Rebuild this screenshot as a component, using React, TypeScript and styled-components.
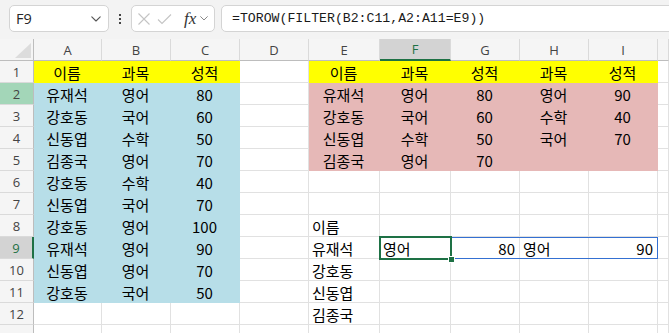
import React from 'react';
import styled, { createGlobalStyle, css } from 'styled-components';

const GlobalStyle = createGlobalStyle`
    html, body {
        margin: 0;
        padding: 0;
        background: #ffffff;
    }
    body {
        font-family: "Noto Sans", "Noto Sans CJK KR", sans-serif;
    }
`;

type Fill = 'yellow' | 'blue' | 'pink';
type Align = 'left' | 'center' | 'right';

const fillColors: Record<Fill, string> = {
    yellow: '#ffff00',
    blue: '#b7dee8',
    pink: '#e6b8b7',
};

const COLS = ['A', 'B', 'C', 'D', 'E', 'F', 'G', 'H', 'I'];
const COL_WIDTHS = [68, 69, 69, 69, 71, 71, 69, 69, 69];
const ROW_COUNT = 13;
const LAST_LABELLED_ROW = 12;

const Page = styled.div`
    width: 669px;
    height: 333px;
    overflow: hidden;
    background: #ffffff;
`;

const TopBar = styled.div`
    display: flex;
    align-items: flex-start;
    height: 39px;
    box-sizing: border-box;
    padding: 5px 0 0 9px;
    background: #f3f3f3;
`;

const Box = styled.div`
    box-sizing: border-box;
    height: 27px;
    background: #ffffff;
    border: 1px solid #d4d4d4;
    border-radius: 5px;
    display: flex;
    align-items: center;
`;

const NameBox = styled(Box)`
    width: 100px;
    padding: 0 7px 0 6px;
    justify-content: space-between;
    font-family: "Open Sans", "Noto Sans", sans-serif;
    font-size: 14.5px;
    color: #262626;
`;

const Kebab = styled.div`
    width: 22px;
    height: 27px;
    display: flex;
    flex-direction: column;
    align-items: center;
    justify-content: center;
    gap: 2px;
`;

const Dot = styled.span`
    width: 2px;
    height: 2px;
    background: #444;
`;

const FxBox = styled(Box)`
    width: 84px;
    padding-left: 5px;
    gap: 6px;
`;

const FxText = styled.span`
    font-family: "Liberation Serif", serif;
    font-style: italic;
    font-size: 17px;
    color: #333;
    margin-left: 6px;
    margin-right: -2px;
    line-height: 1;
`;

const FormulaInput = styled(Box)`
    flex: 1;
    margin-left: 6px;
    margin-right: -12px;
    padding-left: 10px;
    font-family: "Liberation Mono", monospace;
    font-size: 13.2px;
    color: #1a1a1a;
    white-space: nowrap;
`;

const Sheet = styled.div`
    display: grid;
    grid-template-columns: 34px ${COL_WIDTHS.map(w => `${w}px`).join(' ')} 1fr;
    grid-auto-rows: 22px;
`;

const headBase = css`
    box-sizing: border-box;
    display: flex;
    align-items: center;
    justify-content: center;
    font-family: "Open Sans", "Noto Sans", sans-serif;
    font-size: 13px;
    color: #444;
    background: #f5f5f5;
`;

const Corner = styled.div`
    ${headBase};
    position: relative;
    border-right: 1px solid #bdbdbd;
    border-bottom: 1px solid #bdbdbd;
`;

const CornerTriangle = styled.svg`
    position: absolute;
    right: 2px;
    bottom: 2px;
`;

const ColHead = styled.div<{ $active?: boolean }>`
    ${headBase};
    border-right: 1px solid #dadada;
    border-bottom: 1px solid #bdbdbd;
    ${p =>
        p.$active &&
        css`
            background: #d3d3d3;
            color: #1e7145;
            border-bottom: 2px solid #1e7145;
        `}
`;

const RowHead = styled.div<{ $active?: boolean; $hover?: boolean }>`
    ${headBase};
    border-right: 1px solid #bdbdbd;
    border-bottom: 1px solid #dadada;
    ${p =>
        p.$hover &&
        css`
            background: #a3d6b8;
        `}
    ${p =>
        p.$active &&
        css`
            background: #d3d3d3;
            color: #1e7145;
            border-right: 2px solid #1e7145;
        `}
`;

const Cell = styled.div<{ $fill?: Fill; $align: Align }>`
    box-sizing: border-box;
    position: relative;
    display: flex;
    align-items: center;
    padding: 1px 4px 0 3px;
    justify-content: ${p => (p.$align === 'left' ? 'flex-start' : p.$align === 'right' ? 'flex-end' : 'center')};
    font-family: "Noto Sans CJK KR", "Noto Sans", sans-serif;
    font-size: 15px;
    color: #000;
    white-space: nowrap;
    background: ${p => (p.$fill ? fillColors[p.$fill] : '#ffffff')};
    border-right: 1px solid ${p => (p.$fill ? fillColors[p.$fill] : '#e1e1e1')};
    border-bottom: 1px solid ${p => (p.$fill ? fillColors[p.$fill] : '#e1e1e1')};
`;

const SpillOutline = styled.div<{ $width: number }>`
    position: absolute;
    z-index: 2;
    left: -1px;
    top: 0;
    width: ${p => p.$width}px;
    height: 22px;
    box-sizing: border-box;
    border: 1px solid #3470d2;
    pointer-events: none;
`;

const Selection = styled.div`
    position: absolute;
    z-index: 3;
    left: -1px;
    top: -1px;
    width: 73px;
    height: 24px;
    box-sizing: border-box;
    border: 2px solid #1e7145;
    pointer-events: none;
`;

const FillHandle = styled.span`
    position: absolute;
    right: -5px;
    bottom: -5px;
    width: 5px;
    height: 5px;
    background: #1e7145;
    border: 1px solid #ffffff;
`;

type CellData = { v?: string; fill?: Fill; align?: Align };

const source = [
    ['유재석', '영어', '80'],
    ['강호동', '국어', '60'],
    ['신동엽', '수학', '50'],
    ['김종국', '영어', '70'],
    ['강호동', '수학', '40'],
    ['신동엽', '국어', '70'],
    ['강호동', '영어', '100'],
    ['유재석', '영어', '90'],
    ['신동엽', '영어', '70'],
    ['강호동', '국어', '50'],
];

const summary = [
    ['유재석', '영어', '80', '영어', '90'],
    ['강호동', '국어', '60', '수학', '40'],
    ['신동엽', '수학', '50', '국어', '70'],
    ['김종국', '영어', '70', '', ''],
];

const lookupNames = ['이름', '유재석', '강호동', '신동엽', '김종국'];
const spillRow = ['영어', '80', '영어', '90'];

function getCell(row: number, col: number): CellData {
    // row is 1-based sheet row, col is 0-based (A = 0)
    if (row === 1 && col <= 2) return { v: ['이름', '과목', '성적'][col], fill: 'yellow' };
    if (row >= 2 && row <= 11 && col <= 2) return { v: source[row - 2][col], fill: 'blue' };
    if (row === 1 && col >= 4) return { v: ['이름', '과목', '성적', '과목', '성적'][col - 4], fill: 'yellow' };
    if (row >= 2 && row <= 5 && col >= 4) return { v: summary[row - 2][col - 4], fill: 'pink' };
    if (row >= 8 && row <= 12 && col === 4) return { v: lookupNames[row - 8], align: 'left' };
    if (row === 9 && col >= 5) {
        const v = spillRow[col - 5];
        return { v, align: /^\d+$/.test(v) ? 'right' : 'left' };
    }
    return {};
}

const Chevron = ({ size = 10, color = '#555' }: { size?: number; color?: string }) => (
    <svg width={size} height={size * 0.6} viewBox="0 0 10 6" fill="none">
        <path d="M0.8 0.8 L5 5 L9.2 0.8" stroke={color} strokeWidth="1.1" strokeLinecap="round" strokeLinejoin="round" />
    </svg>
);

const CrossIcon = () => (
    <svg width="14" height="14" viewBox="0 0 14 14" fill="none">
        <path d="M1.5 1.5 L12.5 12.5 M12.5 1.5 L1.5 12.5" stroke="#c4c4c4" strokeWidth="1.1" />
    </svg>
);

const CheckIcon = () => (
    <svg width="15" height="12" viewBox="0 0 15 12" fill="none">
        <path d="M1 6.5 L5 10.5 L14 1.5" stroke="#c4c4c4" strokeWidth="1.1" />
    </svg>
);

const SELECTED_ROW = 9;
const SELECTED_COL = 5;

const App = () => {
    const rows = Array.from({ length: ROW_COUNT }, (_, i) => i + 1);
    const spillWidth = COL_WIDTHS.slice(SELECTED_COL).reduce((a, b) => a + b, 0) + 1;

    return (
        <Page>
            <GlobalStyle />
            <TopBar>
                <NameBox>
                    <span>F9</span>
                    <Chevron />
                </NameBox>
                <Kebab>
                    <Dot />
                    <Dot />
                    <Dot />
                </Kebab>
                <FxBox>
                    <CrossIcon />
                    <CheckIcon />
                    <FxText>fx</FxText>
                    <Chevron size={8} color="#777" />
                </FxBox>
                <FormulaInput>=TOROW(FILTER(B2:C11,A2:A11=E9))</FormulaInput>
            </TopBar>

            <Sheet>
                <Corner>
                    <CornerTriangle width="16" height="15" viewBox="0 0 16 15">
                        <polygon points="16,0 16,15 0,15" fill="#dcdcdc" />
                    </CornerTriangle>
                </Corner>
                {COLS.map((c, i) => (
                    <ColHead key={c} $active={i === SELECTED_COL}>
                        {c}
                    </ColHead>
                ))}
                <ColHead />

                {rows.map(r => (
                    <React.Fragment key={r}>
                        <RowHead $active={r === SELECTED_ROW} $hover={r === 2}>
                            {r <= LAST_LABELLED_ROW ? r : null}
                        </RowHead>
                        {COLS.map((c, ci) => {
                            const cell = getCell(r, ci);
                            const isSel = r === SELECTED_ROW && ci === SELECTED_COL;
                            return (
                                <Cell key={c} $fill={cell.fill} $align={cell.align ?? 'center'}>
                                    {cell.v}
                                    {isSel && (
                                        <>
                                            <SpillOutline $width={spillWidth} />
                                            <Selection>
                                                <FillHandle />
                                            </Selection>
                                        </>
                                    )}
                                </Cell>
                            );
                        })}
                        <Cell $align="center" />
                    </React.Fragment>
                ))}
            </Sheet>
        </Page>
    );
};

export default App;
